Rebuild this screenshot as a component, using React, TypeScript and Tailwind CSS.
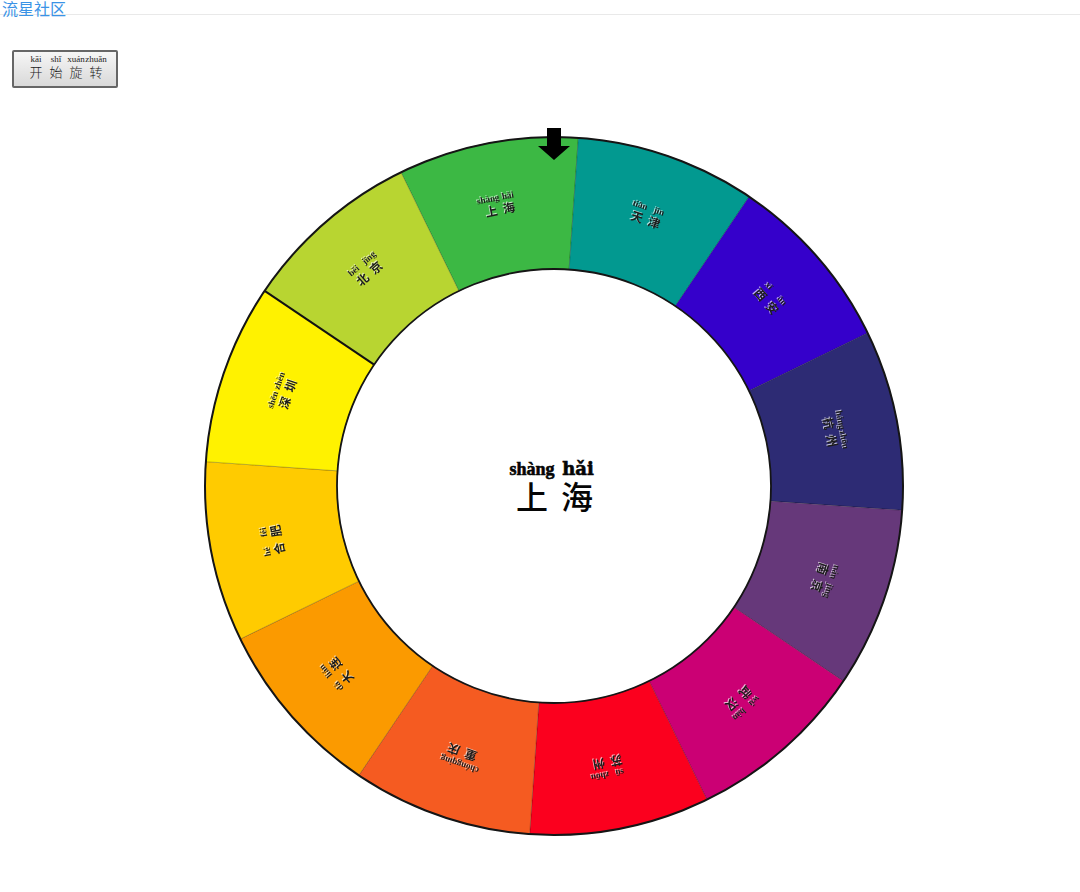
import { useState } from "react";

type City = { name: string; pinyin: [string, string]; fill: string };

const cities: City[] = [
  { name: "上海", pinyin: ["shàng", "hǎi"], fill: "#3cb844" },
  { name: "天津", pinyin: ["tiān", "jīn"], fill: "#029990" },
  { name: "西安", pinyin: ["xī", "ān"], fill: "#3500cb" },
  { name: "杭州", pinyin: ["háng", "zhōu"], fill: "#2d2b74" },
  { name: "南京", pinyin: ["nán", "jīng"], fill: "#66387a" },
  { name: "武汉", pinyin: ["wǔ", "hàn"], fill: "#cb0074" },
  { name: "苏州", pinyin: ["sū", "zhōu"], fill: "#fb001e" },
  { name: "重庆", pinyin: ["chóng", "qìng"], fill: "#f55b21" },
  { name: "大连", pinyin: ["dà", "lián"], fill: "#fb9a00" },
  { name: "合肥", pinyin: ["hé", "féi"], fill: "#ffcb00" },
  { name: "深圳", pinyin: ["shēn", "zhèn"], fill: "#fff200" },
  { name: "北京", pinyin: ["běi", "jīng"], fill: "#b8d531" },
];

const STEP = 360 / cities.length;
const START = -26;
const OUTER = 349;
const INNER = 217;

const point = (radius: number, degrees: number) => {
  const a = (degrees * Math.PI) / 180;
  return `${(radius * Math.sin(a)).toFixed(2)} ${(-radius * Math.cos(a)).toFixed(2)}`;
};

const sector = (i: number) => {
  const from = START + i * STEP;
  const to = from + STEP;
  return `M${point(INNER, from)} L${point(OUTER, from)} A${OUTER} ${OUTER} 0 0 1 ${point(OUTER, to)} L${point(INNER, to)} A${INNER} ${INNER} 0 0 0 ${point(INNER, from)} Z`;
};

function SectorLabel({ city, angle }: { city: City; angle: number }) {
  return (
    <g className="[filter:drop-shadow(-1px_-1px_0_#ffffffb0)]">
      <g transform={`rotate(${angle})`} textAnchor="middle" fill="#1c1c1c">
        <text x="-10" y="-291" className="font-['Liberation_Serif',serif] text-[9px] font-bold">{city.pinyin[0]}</text>
        <text x="10" y="-291" className="font-['Liberation_Serif',serif] text-[9px] font-bold">{city.pinyin[1]}</text>
        <text x="-9" y="-277" className="font-['Noto_Sans_CJK_SC',sans-serif] text-[12px] font-bold">{city.name[0]}</text>
        <text x="9" y="-277" className="font-['Noto_Sans_CJK_SC',sans-serif] text-[12px] font-bold">{city.name[1]}</text>
      </g>
    </g>
  );
}

function Wheel({ turns, selected }: { turns: number; selected: City }) {
  return (
    <svg viewBox="-352 -360 704 712" className="w-full max-w-[704px]" role="img" aria-label={selected.name}>
      <g transform={`rotate(${turns * STEP})`}>
        {cities.map((city, i) => (
          <path key={city.name} d={sector(i)} fill={city.fill} stroke="#000000" strokeOpacity="0.35" strokeWidth="0.6" />
        ))}
        <path d={`M${point(INNER, -56)} L${point(OUTER, -56)}`} stroke="#111111" strokeWidth="2" />
        {cities.map((city, i) => (
          <SectorLabel key={city.name} city={city} angle={START + 15 + i * STEP} />
        ))}
      </g>
      <circle r={OUTER} fill="none" stroke="#151515" strokeWidth="2" />
      <circle r={INNER} fill="none" stroke="#151515" strokeWidth="1.8" />
      <path d="M-7 -358 H7 V-340 H16 L0 -326 L-16 -340 H-7 Z" fill="#000000" />
      <g textAnchor="middle" fill="#050505">
        <text x="-22" y="-11" className="font-['Liberation_Serif',serif] text-[18px] font-bold" stroke="#050505" strokeWidth="0.6">
          {selected.pinyin[0]}
        </text>
        <text x="24" y="-11" className="font-['DejaVu_Serif',serif] text-[18px] font-bold" stroke="#050505" strokeWidth="0.6">
          {selected.pinyin[1]}
        </text>
        <text x="-22" y="23" className="font-['Noto_Sans_CJK_SC',sans-serif] text-[32px] font-medium">{selected.name[0]}</text>
        <text x="23" y="23" className="font-['Noto_Sans_CJK_SC',sans-serif] text-[32px] font-medium">{selected.name[1]}</text>
      </g>
    </svg>
  );
}

const buttonLabel = [
  ["kāi", "开"],
  ["shǐ", "始"],
  ["xuán", "旋"],
  ["zhuǎn", "转"],
];

export default function App() {
  const [turns, setTurns] = useState(0);
  const count = cities.length;
  const selected = cities[(count - (turns % count)) % count];

  return (
    <div className="min-h-screen bg-white">
      <header className="flex h-[15px] items-start border-b border-[#e9e9e9] px-0.5">
        <a href="#" className="font-['Noto_Sans_CJK_SC',sans-serif] text-[16px] leading-4 text-[#3a93e6]">
          流星社区
        </a>
      </header>
      <main className="pt-[35px]">
        <button
          type="button"
          onClick={() => setTurns(turns + 1 + Math.floor(Math.random() * (count - 1)))}
          className="ml-3 flex h-[38px] w-[106px] justify-center rounded-[2px] border-2 border-[#666666] bg-linear-to-b from-[#f6f6f6] to-[#d9d9d9] pt-0.5 pl-0.5 text-[#222222]"
        >
          {buttonLabel.map(([pinyin, character]) => (
            <span key={character} className="flex w-5 flex-col items-center">
              <span className="font-['Liberation_Serif',serif] text-[9px] leading-[11px]">{pinyin}</span>
              <span className="font-['Noto_Sans_CJK_SC',sans-serif] text-[13px] leading-[13px] font-light">{character}</span>
            </span>
          ))}
        </button>
        <div className="mt-[38px] flex justify-center pl-7">
          <Wheel turns={turns} selected={selected} />
        </div>
      </main>
    </div>
  );
}
